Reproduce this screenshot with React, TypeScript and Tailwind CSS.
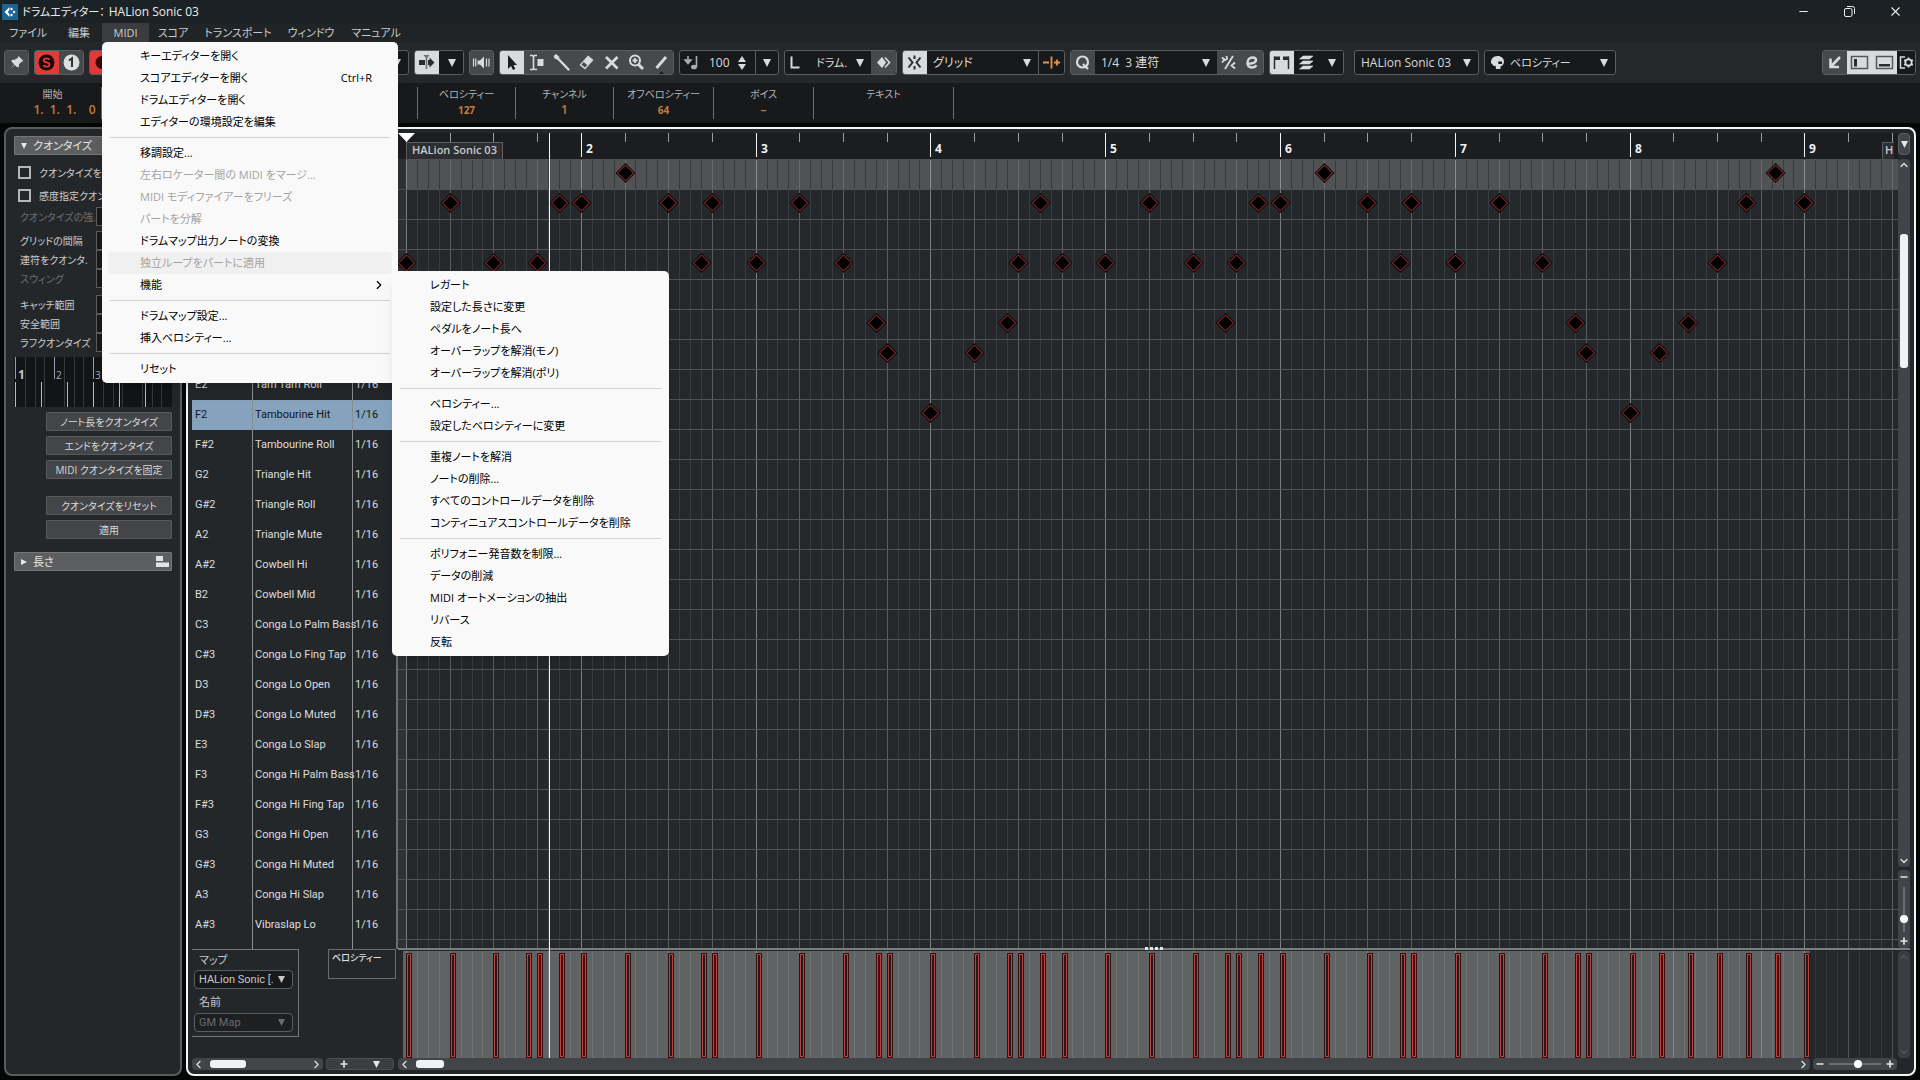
import React from "react";
import { Minus, X, Plus, ChevronLeft, ChevronRight, ChevronUp, ChevronDown } from "lucide-react";

const NOTE_ORIGIN = 8;
const TICK = 174.8 / 48;
const tickX = (t: number) => Math.round(NOTE_ORIGIN + t * TICK);

const NOTES: { row: number; ticks: number[] }[] = [
  { row: 0, ticks: [60, 252, 376] },
  { row: 1, ticks: [12, 42, 48, 72, 84, 108, 174, 204, 234, 240, 264, 276, 300, 368, 384] },
  { row: 3, ticks: [0, 24, 36, 81, 96, 120, 168, 180, 192, 216, 228, 273, 288, 312, 360] },
  { row: 5, ticks: [33, 129, 165, 225, 321, 352] },
  { row: 6, ticks: [132, 156, 324, 344] },
  { row: 8, ticks: [144, 336] },
];

const VELOCITY_TICKS = Array.from(new Set(NOTES.flatMap((n) => n.ticks))).sort((a, b) => a - b);
const SOLID_TICKS = new Set([36, 42, 48, 84, 129, 174, 234, 276, 321, 344, 360, 376]);

const LINES = Array.from({ length: 16 * 22 }, (_, i) => ({
  x: Math.round(NOTE_ORIGIN + i * (174.8 / 16)),
  kind: i % 16 === 0 ? "bar" : i % 4 === 0 ? "beat" : "sub",
}));

const DRUMS: [string, string][] = [
  ["E2", "Tam Tam Roll"],
  ["F2", "Tambourine Hit"],
  ["F#2", "Tambourine Roll"],
  ["G2", "Triangle Hit"],
  ["G#2", "Triangle Roll"],
  ["A2", "Triangle Mute"],
  ["A#2", "Cowbell Hi"],
  ["B2", "Cowbell Mid"],
  ["C3", "Conga Lo Palm Bass"],
  ["C#3", "Conga Lo Fing Tap"],
  ["D3", "Conga Lo Open"],
  ["D#3", "Conga Lo Muted"],
  ["E3", "Conga Lo Slap"],
  ["F3", "Conga Hi Palm Bass"],
  ["F#3", "Conga Hi Fing Tap"],
  ["G3", "Conga Hi Open"],
  ["G#3", "Conga Hi Muted"],
  ["A3", "Conga Hi Slap"],
  ["A#3", "Vibraslap Lo"],
];

type Item = { label: string; disabled?: boolean; hover?: boolean; key?: string; sub?: boolean };

const MIDI_MENU: Item[][] = [
  [
    { label: "キーエディターを開く" },
    { label: "スコアエディターを開く", key: "Ctrl+R" },
    { label: "ドラムエディターを開く" },
    { label: "エディターの環境設定を編集" },
  ],
  [
    { label: "移調設定..." },
    { label: "左右ロケーター間の MIDI をマージ...", disabled: true },
    { label: "MIDI モディファイアーをフリーズ", disabled: true },
    { label: "パートを分解", disabled: true },
    { label: "ドラムマップ出力ノートの変換" },
    { label: "独立ループをパートに適用", disabled: true, hover: true },
    { label: "機能", sub: true },
  ],
  [{ label: "ドラムマップ設定..." }, { label: "挿入ベロシティー..." }],
  [{ label: "リセット" }],
];

const FUNCTION_MENU: Item[][] = [
  [
    { label: "レガート" },
    { label: "設定した長さに変更" },
    { label: "ペダルをノート長へ" },
    { label: "オーバーラップを解消(モノ)" },
    { label: "オーバーラップを解消(ポリ)" },
  ],
  [{ label: "ベロシティー..." }, { label: "設定したベロシティーに変更" }],
  [
    { label: "重複ノートを解消" },
    { label: "ノートの削除..." },
    { label: "すべてのコントロールデータを削除" },
    { label: "コンティニュアスコントロールデータを削除" },
  ],
  [
    { label: "ポリフォニー発音数を制限..." },
    { label: "データの削減" },
    { label: "MIDI オートメーションの抽出" },
    { label: "リバース" },
    { label: "反転" },
  ],
];

function Menu({ groups, className }: { groups: Item[][]; className: string }) {
  return (
    <div role="menu" className={`absolute rounded-[5px] bg-[#f9f9f9] py-[3px] text-[11px] text-black shadow-lg ${className}`}>
      {groups.map((group, g) => (
        <div key={g}>
          {g > 0 && <div role="separator" className="mx-2 my-1 h-px bg-[#d2d3d3]" />}
          {group.map((it) => (
            <button
              key={it.label}
              role="menuitem"
              disabled={it.disabled}
              className={`mx-1.5 flex h-[22px] w-[calc(100%-12px)] items-center rounded-sm pr-5 pl-8 text-left whitespace-nowrap ${
                it.disabled ? "text-[#a3a3a3]" : ""
              } ${it.hover ? "bg-[#f0f0f0]" : ""}`}
            >
              <span className="flex-1">{it.label}</span>
              {it.key && <span>{it.key}</span>}
              {it.sub && <ChevronRight size={14} className="-mr-3.5" />}
            </button>
          ))}
        </div>
      ))}
    </div>
  );
}

function Down({ className = "" }: { className?: string }) {
  return (
    <svg viewBox="0 0 8 8" className={`size-2 shrink-0 ${className}`} fill="currentColor" aria-hidden="true">
      <path d="M0 0h8L4 8z" />
    </svg>
  );
}

function Select({ label, value, className, disabled }: { label: string; value: string; className: string; disabled?: boolean }) {
  return (
    <span className={`relative flex items-center ${disabled ? "text-[#6a6c6e]" : ""} ${className}`}>
      <select aria-label={label} disabled={disabled} className="h-full w-full appearance-none bg-transparent pl-1.5 outline-none">
        <option>{value}</option>
      </select>
      <Down className="pointer-events-none absolute right-[7px]" />
    </span>
  );
}

function Group({ className = "", children }: { className?: string; children: React.ReactNode }) {
  return (
    <div className={`flex h-[25px] shrink-0 overflow-hidden rounded-[3px] border border-[#5b5d5f] bg-[#17191a] ${className}`}>
      {children}
    </div>
  );
}

function Tool({ label, tone = "grey", className = "", children }: { label: string; tone?: "grey" | "white" | "dark" | "red"; className?: string; children: React.ReactNode }) {
  const tones = {
    grey: "bg-[#47494c] text-[#d9dadb]",
    white: "bg-[#d9dadb] text-[#2a2c2e]",
    dark: "bg-[#17191a] text-[#d9dadb]",
    red: "bg-[#e23a3b] text-[#4a0a0c]",
  };
  return (
    <button aria-label={label} className={`-my-px flex h-[25px] w-[25px] shrink-0 items-center justify-center ${tones[tone]} ${className}`}>
      {children}
    </button>
  );
}

function Icon({ children }: { children: React.ReactNode }) {
  return (
    <svg viewBox="0 0 25 25" width="25" height="25" fill="none" stroke="none" className="shrink-0" aria-hidden="true">
      {children}
    </svg>
  );
}

function TitleBar() {
  return (
    <header className="flex h-[23px] shrink-0 items-center bg-[#1b2226] pl-0.5 text-[#ececec]">
      <svg viewBox="0 0 16 16" className="size-4" aria-hidden="true">
        <rect width="16" height="16" fill="#1c6391" />
        <path d="M7.500 3v3L5.700 8l1.800 2v3L2.500 8z" fill="#fff" />
        <path d="M9.500 3.500l1.500 1.500-1.500 1.500L8 5zM9.500 9.500L11 11l-1.500 1.500L8 11zM12 6.500L13.500 8 12 9.500 10.500 8z" fill="#fff" />
      </svg>
      <h1 className="ml-1 flex flex-1 items-center gap-1 whitespace-nowrap">
        <span className="text-[11px]">ドラムエディター：</span>
        <span>HALion Sonic 03</span>
      </h1>
      <button aria-label="最小化" className="flex w-[45px] justify-center"><Minus size={13} strokeWidth={2} /></button>
      <button aria-label="元に戻す" className="flex w-[46px] justify-center">
        <svg viewBox="0 0 11 11" className="size-[11px]" fill="none" stroke="currentColor" aria-hidden="true">
          <rect x=".500" y="2.500" width="7.500" height="8" rx="1.500" />
          <path d="M3 .5h5.500a2 2 0 0 1 2 2V8" />
        </svg>
      </button>
      <button aria-label="閉じる" className="mr-0.5 flex w-[46px] justify-center"><X size={15} strokeWidth={1.7} /></button>
    </header>
  );
}

function MenuBar() {
  const items: [string, string][] = [
    ["ファイル", "w-[56px]"],
    ["編集", "w-[46px]"],
    ["MIDI", "w-[47px] bg-[#3b3c3f]"],
    ["スコア", "w-[48px]"],
    ["トランスポート", "w-[82px]"],
    ["ウィンドウ", "w-[64px]"],
    ["マニュアル", "w-[66px]"],
  ];
  return (
    <nav className="flex h-[19px] shrink-0 items-stretch bg-[#212427] text-[11px] text-[#c9cacb]">
      {items.map(([t, w]) => (
        <button key={t} className={`flex items-center justify-center whitespace-nowrap ${w}`}>{t}</button>
      ))}
    </nav>
  );
}

function Toolbar() {
  return (
    <div className="flex h-[41px] shrink-0 items-center gap-[5px] bg-[#25282b] px-1 text-[#d9dadb]">
      <Group>
        <Tool label="固定" className="-mx-px">
          <Icon><path d="M14.500 6l5 5-2 .8-2.500 2.500-.2 3-2-.3-2.300-2.300L6 19l4.200-4.700-2.400-2.300-.3-2 3-.2L13.700 8z" fill="currentColor" /></Icon>
        </Tool>
      </Group>
      <Group className="w-[50px]">
        <Tool label="ソロエディター" tone="red" className="-ml-px">
          <Icon>
            <circle cx="12.500" cy="12.500" r="8" fill="#1d0506" />
            <path d="M15.500 9.800c-.5-1-1.600-1.500-3-1.500-1.700 0-2.900.8-2.900 2.100 0 2.800 6 1.300 6 4.100 0 1.300-1.300 2.200-3.100 2.200-1.600 0-2.800-.6-3.200-1.700" stroke="#e23a3b" strokeWidth="1.800" />
          </Icon>
        </Tool>
        <Tool label="フィードバック">
          <Icon>
            <circle cx="12.500" cy="12.500" r="8" fill="#dcdddd" />
            <path d="M10 10.500l3-2.300V17" stroke="#2f3133" strokeWidth="2" />
          </Icon>
        </Tool>
      </Group>
      <Group className="w-[320px]">
        <Tool label="録音" tone="red" className="-ml-px"><Icon><circle cx="13" cy="12.500" r="6.500" fill="#3a0507" /></Icon></Tool>
        <span className="flex-1" />
        <Select label="表示" value="" className="w-[60px]" />
      </Group>
      <Group className="w-[50px]">
        <Tool label="オートスクロール" tone="white" className="-ml-px">
          <Icon>
            <path d="M5 10h6v5H5zM14 10h1.500V7.500l5 5-5 5V15H14z" fill="#2a2c2e" />
            <path d="M9.500 5h6l-2.200 2.800V19h-1.600V7.800z" fill="#6d6f71" />
          </Icon>
        </Tool>
        <Tool label="オートスクロール設定" tone="dark"><Down /></Tool>
      </Group>
      <Group>
        <Tool label="音響フィードバック" className="-mx-px">
          <Icon>
            <path d="M8.500 10.500h2.500l4-4v12l-4-4H8.500z" fill="currentColor" />
            <path d="M4.500 8.500v8M6.700 8.500v8M17.500 8.500v8M20 8.500v8" stroke="currentColor" strokeWidth="1.200" />
          </Icon>
        </Tool>
      </Group>
      <Group className="w-[175px]">
        <Tool label="選択" tone="white" className="-ml-px"><Icon><path d="M9 5v14l3-3 2 4 2.300-1-1.800-4H18z" fill="#1c1e20" /></Icon></Tool>
        <Tool label="範囲">
          <Icon>
            <path d="M6 5.500h2.500L9.500 6.500l1-1H13M6 19.500h2.500l1-1 1 1H13M9.500 6v13" stroke="currentColor" strokeWidth="1.600" />
            <path d="M13.500 9h6v7h-6z" fill="currentColor" />
          </Icon>
        </Tool>
        <Tool label="ドラムスティック">
          <Icon>
            <path d="M4.500 6l2.500-2 3.500 3-1.500 2.500-3-.5z" fill="currentColor" />
            <path d="M8 7.500L19.500 19.500" stroke="currentColor" strokeWidth="2.400" strokeLinecap="round" />
          </Icon>
        </Tool>
        <Tool label="削除">
          <Icon>
            <path d="M14 5.500l5.500 4.500-8.500 9.500L5.500 15z" fill="currentColor" />
            <path d="M7.500 14.700l3.500 2.800 2.200-2.500-3.500-2.900z" fill="#47494c" />
          </Icon>
        </Tool>
        <Tool label="ミュート"><Icon><path d="M7 7l11.500 11.500M18.500 7L7 18.500" stroke="currentColor" strokeWidth="2.800" /></Icon></Tool>
        <Tool label="ズーム">
          <Icon>
            <circle cx="11" cy="10.500" r="5" stroke="currentColor" strokeWidth="2" />
            <path d="M8.500 10.500h5M11 8v5" stroke="currentColor" strokeWidth="1.800" />
            <path d="M14.500 14.500L19 19" stroke="currentColor" strokeWidth="3" />
          </Icon>
        </Tool>
        <Tool label="ライン">
          <Icon>
            <path d="M7.500 18L17 7" stroke="currentColor" strokeWidth="2.800" />
            <path d="M8.500 25l4-3.500 4 3.500z" fill="#17191a" />
          </Icon>
        </Tool>
      </Group>
      <Group className="w-[100px] items-center">
        <Icon>
          <path d="M8 6v7M5 10l3 3.500 3-3.500z" stroke="#a9abac" fill="#a9abac" strokeWidth="1.500" />
          <path d="M16.500 6v11" stroke="#a9abac" strokeWidth="1.600" />
          <ellipse cx="14" cy="17" rx="3" ry="2.300" fill="#a9abac" />
        </Icon>
        <input aria-label="挿入ベロシティー" defaultValue="100" className="w-[31px] bg-transparent pl-1 outline-none" />
        <svg viewBox="0 0 8 14" className="mr-[9px] ml-0.5 h-3.5 w-2" fill="currentColor" aria-hidden="true"><path d="M0 6h8L4 0zM0 8h8l-4 6z" /></svg>
        <button aria-label="ベロシティー値" className="-my-px flex h-[25px] flex-1 items-center justify-center border-l border-[#5b5d5f]"><Down /></button>
      </Group>
      <Group className="w-[113px] items-center">
        <Icon><path d="M6.500 6.500v11h8" stroke="currentColor" strokeWidth="2" /></Icon>
        <Select label="長さクオンタイズ" value="ドラム." className="w-[62px] text-[11px]" />
        <Tool label="ステップ" className="flex-1"><Icon><path d="M6 12.500L11 7l4 5.500-4 5.500z" fill="currentColor" /><path d="M14 7.500l4.500 5-4.500 5" stroke="currentColor" strokeWidth="1.600" /></Icon></Tool>
      </Group>
      <Group className="w-[163px]">
        <Tool label="スナップ" tone="white" className="-ml-px">
          <Icon><path d="M12.500 5.500V9M12.500 16v3.500M6.500 7.500l4 5-4 5M18.500 7.500l-4 5 4 5" stroke="currentColor" strokeWidth="2" /></Icon>
        </Tool>
        <Select label="スナップの種類" value="グリッド" className="flex-1" />
        <button aria-label="グリッド相対" className="-my-px border-l border-[#5b5d5f] text-[#e8954a]">
          <Icon><path d="M4 12.500h6M12.500 6.500v12M15 12.500h6M18 9.500v6" stroke="currentColor" strokeWidth="1.800" /></Icon>
        </button>
      </Group>
      <Group className="w-[194px]">
        <Tool label="クオンタイズ" className="-ml-px"><Icon><circle cx="12.500" cy="12" r="5.500" stroke="currentColor" strokeWidth="2.200" /><path d="M13 14l5 5" stroke="currentColor" strokeWidth="2.200" /></Icon></Tool>
        <Select label="クオンタイズプリセット" value={"1/4\u00a0 3 連符"} className="flex-1" />
        <Tool label="ソフトクオンタイズ" className="!w-[23px]"><Icon><path d="M17 6L9 19M6 7.500l2.500 2-2.500 3M10.500 6l.5 3-3 1.500M19 12.500l-3.500 3 3.500 3" stroke="currentColor" strokeWidth="1.800" /></Icon></Tool>
        <Tool label="クオンタイズパネル" className="!w-[23px]"><Icon><path d="M8 13.500c4 .5 9-.3 9-3.500 0-1.500-1.500-2.500-3.500-2.500-3 0-5 2.500-5 5.500s1.800 4.500 4.500 4.500c2 0 3.500-.8 4.500-2.200" stroke="currentColor" strokeWidth="2.400" /></Icon></Tool>
      </Group>
      <Group className="mr-[5px] w-[75px]">
        <Tool label="パート境界" tone="white" className="-ml-px"><Icon><path d="M5.500 19V6.500M19.500 19V6.500" stroke="currentColor" strokeWidth="1.500" /><path d="M5.500 6.500H11V10H5.500zM14 6.500h5.500V10H14z" fill="currentColor" /></Icon></Tool>
        <Tool label="レイヤー" tone="dark"><Icon><path d="M9 6h10l-3.500 3h-10zM9 11h10l-3.500 3h-10zM9 16h10l-3.500 3h-10z" fill="currentColor" stroke="currentColor" strokeWidth=".6" /></Icon></Tool>
        <Tool label="レイヤー設定" tone="dark"><Down /></Tool>
      </Group>
      <Group className="w-[125px]"><Select label="パート" value="HALion Sonic 03" className="flex-1" /></Group>
      <Group className="w-[132px]">
        <span className="-my-px -mr-1 flex"><Icon><path d="M12.500 6c4 0 6.500 2.500 6.500 5.500 0 2.500-1.500 4.500-3.500 5V19H11l-.5-3.500c-1 1-2.500.5-2.500-.5l-2-2C5.500 9 8.500 6 12.500 6z" fill="currentColor" /><path d="M13 11.500h4v2.500h-3.500z" fill="#17191a" /></Icon></span>
        <Select label="イベントカラー" value="ベロシティー" className="-ml-0.5 flex-1 text-[11px]" />
      </Group>
      <Group className="ml-auto w-[94px]">
        <Tool label="エディターを開く" className="-ml-px"><Icon><path d="M18 7L9 16.500M8.500 8.500v8.500H17" stroke="currentColor" strokeWidth="2.600" /></Icon></Tool>
        <Tool label="左ゾーン" tone="white"><Icon><rect x="4.500" y="6.500" width="16" height="12" stroke="#55585a" strokeWidth="1.500" /><path d="M7 9h3v7.500H7z" fill="currentColor" /></Icon></Tool>
        <Tool label="下ゾーン" tone="white"><Icon><rect x="4.500" y="6.500" width="16" height="12" stroke="#55585a" strokeWidth="1.500" /><path d="M7 14h11v2.500H7z" fill="currentColor" /></Icon></Tool>
        <Tool label="レイアウト設定" tone="dark" className="!w-[19px]">
          <Icon><path d="M11 7H6.500v11H11" stroke="currentColor" strokeWidth="1.500" /><circle cx="14.500" cy="12.500" r="3.200" stroke="currentColor" strokeWidth="1.800" /><path d="M14.500 7.500v2M14.500 15.500v2M10.200 10l1.700 1M17 14l1.800 1M10.200 15l1.700-1M17 11l1.800-1" stroke="currentColor" strokeWidth="1.800" /></Icon>
        </Tool>
      </Group>
    </div>
  );
}

function InfoLine() {
  const cells: [string, string, string][] = [
    ["開始", "1.  1.  1.    0", "w-[98px] text-[12px] font-semibold [&>dd]:pl-6"],
    ["", "", "w-[316px]"],
    ["ベロシティー", "127", "w-[98px] text-[10px] font-bold"],
    ["チャンネル", "1", "w-[98px] text-[12px] font-semibold"],
    ["オフベロシティー", "64", "w-[100px] text-[10px] font-bold"],
    ["ボイス", "–", "w-[100px] text-[12px] font-semibold"],
    ["テキスト", "", "w-[140px] text-[12px]"],
  ];
  return (
    <dl className="flex h-10 shrink-0 bg-[#18191b] py-1 pl-1">
      {cells.map(([label, value, cls], i) => (
        <div key={i} className={`flex shrink-0 flex-col items-center border-r border-[#6b6d6f] text-[#c07f3f] ${cls}`}>
          <dt className="flex h-3.5 items-center text-[10px] font-normal text-[#b4b5b6]">{label}</dt>
          <dd className="flex h-[22px] items-center whitespace-pre">{value}</dd>
        </div>
      ))}
    </dl>
  );
}

function Field({ label, dim }: { label: string; dim?: boolean }) {
  return (
    <label className={`flex h-[19px] items-center pl-1.5 text-[10px] whitespace-nowrap ${dim ? "text-[#6c6e70]" : "text-[#cbcccd]"}`}>
      <span className="w-[76px]">{label}</span>
      <input disabled={dim} className="h-[19px] w-0 flex-1 border border-[#5b5d5f] bg-[#17191a]" />
    </label>
  );
}

function PanelButton({ children }: { children: string }) {
  return (
    <button className="ml-8 flex h-[19px] items-center justify-center rounded-[1px] border border-[#57595b] bg-[#434548] text-[10px] text-[#d8d9da]">
      {children}
    </button>
  );
}

function QuantizePanel() {
  return (
    <aside className="mr-1 flex w-[178px] shrink-0 flex-col rounded-lg border-2 border-[#5a5c5d] bg-[#24272a] px-2 pt-[7px]">
      <button className="flex h-[19px] items-center rounded-[1px] border border-[#757779] bg-[#5c5e60] pl-1.5 text-[11px] text-[#e6e7e7]">
        <Down className="mr-1.5 !size-1.5" />クオンタイズ
      </button>
      <div className="mt-1.5 flex flex-col pl-1 text-[10px] text-[#cbcccd]">
        {["クオンタイズを自動適用", "感度指定クオンタイズ"].map((t) => (
          <label key={t} className="flex h-[23px] items-center gap-2 whitespace-nowrap">
            <input type="checkbox" className="size-[13px] shrink-0 appearance-none border-2 border-[#b5b6b7]" />
            {t}
          </label>
        ))}
      </div>
      <Field label="クオンタイズの強." dim />
      <div className="mt-[5px]">
        <Field label="グリッドの間隔" />
        <Field label="連符をクオンタ." />
        <Field label="スウィング" dim />
      </div>
      <div className="mt-[7px]">
        <Field label="キャッチ範囲" />
        <Field label="安全範囲" />
        <Field label="ラフクオンタイズ" />
      </div>
      <svg className="mt-[5px] h-[50px] w-full bg-[#121416]" aria-hidden="true">
        {Array.from({ length: 16 }, (_, i) => (
          <rect key={i} x={Math.round(1 + i * 9.75)} y="0" width="1" height={i % 4 ? 50 : 22} fill={i % 4 ? "#36383a" : "#9a9cab"} />
        ))}
        {Array.from({ length: 6 }, (_, i) => (
          <rect key={i} x={1 + i * 26} y="25" width="1" height="25" fill="#8fdc7c" />
        ))}
        <text x="4" y="22" fontSize="12" fontWeight="700" fill="#c3c5d0">1</text>
        <text x="42" y="22" fontSize="10" fill="#a7a9b3">2</text>
        <text x="81" y="22" fontSize="10" fill="#a7a9b3">3</text>
        <text x="120" y="22" fontSize="10" fill="#a7a9b3">4</text>
      </svg>
      <div className="mt-[5px] flex flex-col gap-[5px]">
        <PanelButton>ノート長をクオンタイズ</PanelButton>
        <PanelButton>エンドをクオンタイズ</PanelButton>
        <PanelButton>MIDI クオンタイズを固定</PanelButton>
      </div>
      <div className="mt-[17px] flex flex-col gap-[5px]">
        <PanelButton>クオンタイズをリセット</PanelButton>
        <PanelButton>適用</PanelButton>
      </div>
      <button className="mt-[13px] flex h-[19px] items-center rounded-[1px] border border-[#757779] bg-[#5c5e60] pl-1.5 text-[11px] text-[#e6e7e7]">
        <Down className="mr-1.5 !size-1.5 -rotate-90" />
        <span className="flex-1 text-left">長さ</span>
        <svg viewBox="0 0 13 11" className="mr-0.5 h-[11px] w-[13px]" fill="#e2e3e3" aria-hidden="true"><path d="M0 0h7v5H0zM0 6.500h13V11H0z" /></svg>
      </button>
    </aside>
  );
}

function DrumList() {
  return (
    <div className="flex w-[206px] shrink-0 flex-col">
      <div className="flex min-h-0 flex-1 flex-col overflow-hidden border-r-2 border-[#6b6e70] pt-[27px]">
        <table className="w-full table-fixed border-separate border-spacing-0 font-[Roboto,sans-serif] text-[11px] text-[#dcddde]">
          <colgroup><col className="w-[61px]" /><col className="w-[100px]" /><col /></colgroup>
          <tbody>
            <tr className="h-[210px]">
              <td className="border-r border-[#8a8c8d]" /><td className="border-r border-[#8a8c8d]" /><td />
            </tr>
            {DRUMS.map(([pitch, name]) => (
              <tr key={pitch} className={`h-[30px] ${pitch === "F2" ? "bg-[#86a3be] text-[#101518]" : ""}`}>
                <td className="border-r border-[#8a8c8d] pl-[3px]">{pitch}</td>
                <td className="border-r border-[#8a8c8d] pl-0.5 whitespace-nowrap">{name}</td>
                <td className="pl-0.5">1/16</td>
              </tr>
            ))}
            <tr className="h-[30px]">
              <td className="border-r border-[#8a8c8d]" /><td className="border-r border-[#8a8c8d]" /><td />
            </tr>
          </tbody>
        </table>
      </div>
      <div className="flex h-[109px] shrink-0 items-start justify-between pr-0.5">
        <div className="flex h-[88px] w-[107px] flex-col border border-l-0 border-[#75787a] pr-[5px] pl-0.5 text-[11px] text-[#c6c7c8]">
          <span className="flex h-[20px] items-center pl-[5px]">マップ</span>
          <Select label="マップ" value="HALion Sonic [." className="h-[19px] w-[99px] rounded-sm border border-[#5b5d5f] bg-[#17191a] font-[Roboto,sans-serif] [&>select]:pl-1 [&>svg]:size-[7px]" />
          <span className="flex h-6 items-center pt-0.5 pl-[5px]">名前</span>
          <Select label="名前" value="GM Map" disabled className="h-[19px] w-[99px] rounded-sm border border-[#5b5d5f] bg-[#1d1f21] font-[Roboto,sans-serif] [&>select]:pl-1 [&>svg]:size-[7px]" />
        </div>
        <button className="flex h-[30px] w-[68px] items-start border border-[#6b6e70] pl-[3px] text-[9px] font-medium text-[#e0e1e2]">ベロシティー</button>
      </div>
      <div className="flex h-3 shrink-0 text-[#e4e5e5]">
        <div className="flex w-[131px] items-center rounded-sm bg-[#424548]">
          <ChevronLeft size={13} />
          <span className="ml-[5px] h-2 w-9 rounded-[3px] bg-[#f0f1f3]" />
          <ChevronRight size={13} className="ml-auto" />
        </div>
        <div className="ml-[3px] flex w-[68px] items-center rounded-sm border border-[#4d5052] bg-[#3b3e41]">
          <button aria-label="レーンを追加" className="flex flex-1 justify-center"><Plus size={10} strokeWidth={4} /></button>
          <button aria-label="レーン設定" className="flex flex-1 justify-center"><Down className="!size-[7px]" /></button>
        </div>
      </div>
    </div>
  );
}

const LINE_FILL: Record<string, string> = { bar: "#7b7e80", beat: "#5b5d5f", sub: "#393c3f" };

function Ruler() {
  const beats = Array.from({ length: 88 }, (_, i) => i);
  return (
    <div className="relative h-[26px] shrink-0 overflow-hidden bg-[#1b1d20]">
      <svg className="absolute inset-0 h-full w-full" aria-hidden="true">
        {beats.map((b) => (
          <rect key={b} x={tickX(b * 12)} y="0" width="1" height={b % 4 === 0 ? 24 : 9} fill={b % 4 === 0 ? "#f2f2f2" : "#9b9d9f"} />
        ))}
        <path d="M0 0h17L8.500 9z" fill="#fff" />
      </svg>
      <div className="absolute top-[9px] left-2 flex h-[17px] w-[97px] items-start justify-center border border-b-0 border-[#5c5e60] bg-[#2c2e31] text-[11px] leading-[14px] font-semibold whitespace-nowrap text-[#c9cacb]">
        HALion Sonic 03
      </div>
      {[2, 3, 4, 5, 6, 7, 8, 9].map((n) => (
        <span key={n} className="absolute top-2 text-[12px] leading-4 font-bold text-[#f0f0f0]" style={{ left: tickX((n - 1) * 48) + 5 }}>
          {n}
        </span>
      ))}
      <div className="absolute top-[9px] right-1 h-[17px] w-3 overflow-hidden border-t border-l border-[#5c5e60] bg-[#2c2e31] pl-0.5 text-[11px] leading-[14px] font-semibold text-[#c9cacb]">
        H
      </div>
    </div>
  );
}

function NoteGrid() {
  return (
    <div className="relative min-h-0 flex-1 overflow-hidden bg-[#24282b]">
      <svg className="absolute inset-0 h-full w-full" aria-hidden="true">
        <rect x="0" y="0" width="8" height="100%" fill="#2f3235" />
        <rect x="8" y="0" width="100%" height="31" fill="#505253" />
        {LINES.map((l, i) => (
          <g key={i}>
            <rect x={l.x} y="1" width="1" height="29" fill={l.kind === "sub" ? "#383a3c" : l.kind === "bar" ? "#8b8d8e" : "#696b6c"} />
            <rect x={l.x} y="31" width="1" height="100%" fill={LINE_FILL[l.kind]} />
          </g>
        ))}
        {Array.from({ length: 60 }, (_, i) => (
          <rect key={i} x="0" y={30 + i * 30} width="100%" height="1" fill="#515456" />
        ))}
        {NOTES.flatMap((n) =>
          n.ticks.map((t) => (
            <g key={`${n.row}-${t}`} transform={`translate(${tickX(t)} ${n.row * 30 + 14})`}>
              <path d="M.5-10 10.500 0 .5 10-9.500 0z" fill="#120507" />
              <path d="M.5-8 8.500 0 .5 8-7.500 0z" fill="#000" stroke="#b23a42" strokeWidth="1" />
            </g>
          )),
        )}
      </svg>
    </div>
  );
}

function VelocityLane() {
  const end = tickX(384) + 6;
  return (
    <svg className="h-full min-w-0 flex-1 bg-[#24282b]" aria-hidden="true">
      {LINES.map((l, i) => (
        <rect key={i} x={l.x} y="0" width="1" height="100%" fill={l.kind === "sub" ? "#34373a" : "#515456"} />
      ))}
      <rect x="5" y="0" width={end - 5} height="100%" fill="#606364" />
      {LINES.filter((l) => l.x < end).map((l, i) => (
        <rect key={i} x={l.x} y="0" width="1" height="100%" fill={l.kind === "sub" ? "#707475" : l.kind === "beat" ? "#7f8485" : "#939798"} />
      ))}
      {VELOCITY_TICKS.map((t) => (
        <g key={t}>
          <rect x={tickX(t)} y="2" width="6" height="105" fill="#3a0d0e" />
          <rect x={tickX(t) + 1.500} y="3.500" width="3" height="102" fill={SOLID_TICKS.has(t) ? "#5e0507" : "#241a1b"} stroke="#b8443f" strokeWidth="1" />
        </g>
      ))}
    </svg>
  );
}

const SLIDER =
  "min-w-0 appearance-none bg-transparent [&::-webkit-slider-thumb]:size-2 [&::-webkit-slider-thumb]:appearance-none [&::-webkit-slider-thumb]:rounded-full [&::-webkit-slider-thumb]:bg-white";

function Editor() {
  return (
    <main className="flex min-w-0 flex-1 rounded-lg border-2 border-[#f4f4f4] bg-[#24272a] p-1">
      <DrumList />
      <section className="relative flex min-w-0 flex-1 flex-col">
        <div className="flex min-h-0 flex-1">
          <div className="flex min-w-0 flex-1 flex-col">
            <Ruler />
            <NoteGrid />
          </div>
          <div className="flex w-3 shrink-0 flex-col text-[#e4e5e5]">
            <button aria-label="ルーラー設定" className="flex h-[22px] items-center justify-center rounded-sm border border-[#5b5d5f] bg-[#434548]"><Down className="!size-[7px]" /></button>
            <div className="mt-1 flex min-h-0 flex-1 flex-col items-center rounded-sm bg-[#424548]">
              <ChevronUp size={12} strokeWidth={2.500} />
              <span className="mt-[63px] h-[134px] w-2 rounded-[3px] bg-[#f0f1f3]" />
              <ChevronDown size={12} strokeWidth={2.500} className="mt-auto" />
            </div>
            <div className="mt-[3px] flex h-[78px] flex-col items-center justify-between rounded-sm bg-[#424548] py-0.5">
              <Minus size={10} strokeWidth={4} />
              <input type="range" aria-label="垂直ズーム" defaultValue={78} className={`h-[45px] w-2 [background:linear-gradient(#6b6e70,#6b6e70)_center/2px_100%_no-repeat] [writing-mode:vertical-lr] ${SLIDER}`} />
              <Plus size={10} strokeWidth={4} />
            </div>
          </div>
        </div>
        <div className="relative mb-px h-0.5 shrink-0 bg-[#7b7e80]">
          <span className="absolute -top-px left-1/2 flex -translate-x-1/2 gap-0.5">
            {[0, 1, 2, 3].map((i) => <i key={i} className="h-[3px] w-[3px] bg-[#e6e6e6]" />)}
          </span>
        </div>
        <div className="flex h-[107px] shrink-0">
          <VelocityLane />
          <div className="flex w-3 flex-col items-center justify-between rounded-sm bg-[#3b3e41] text-[#6e7173]">
            <ChevronUp size={12} />
            <ChevronDown size={12} />
          </div>
        </div>
        <div className="flex h-3 shrink-0 gap-[3px] pr-[13px] text-[#e4e5e5]">
          <div className="flex flex-1 items-center rounded-sm bg-[#424548]">
            <ChevronLeft size={13} />
            <span className="ml-[5px] h-2 w-7 rounded-[3px] bg-[#f0f1f3]" />
            <ChevronRight size={13} className="ml-auto" />
          </div>
          <div className="flex w-[84px] items-center justify-between rounded-sm bg-[#424548] px-0.5">
            <Minus size={10} strokeWidth={4} />
            <input type="range" aria-label="水平ズーム" defaultValue={57} className={`h-2 w-[52px] [background:linear-gradient(#6b6e70,#6b6e70)_center/100%_2px_no-repeat] ${SLIDER}`} />
            <Plus size={10} strokeWidth={4} />
          </div>
        </div>
        <div className="pointer-events-none absolute top-0 bottom-3 left-[151px] w-px bg-[#f5f5f5]" />
      </section>
    </main>
  );
}

export default function App() {
  return (
    <div className="relative flex h-screen flex-col overflow-hidden bg-[#050606] font-['Open_Sans','Noto_Sans_CJK_JP',sans-serif] text-[12px] leading-4 [font-feature-settings:'palt']">
      <TitleBar />
      <MenuBar />
      <Toolbar />
      <InfoLine />
      <div className="flex min-h-0 flex-1 p-1">
        <QuantizePanel />
        <Editor />
      </div>
      <Menu groups={MIDI_MENU} className="top-[42px] left-[102px] w-[296px]" />
      <Menu groups={FUNCTION_MENU} className="top-[271px] left-[392px] w-[277px]" />
    </div>
  );
}
